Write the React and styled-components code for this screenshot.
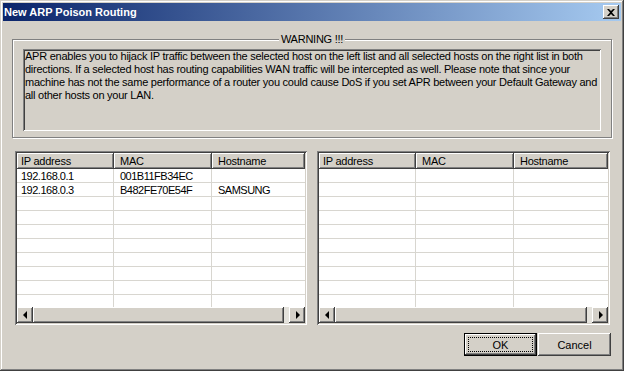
import React from 'react'
import styled, { createGlobalStyle } from 'styled-components'

const GlobalStyle = createGlobalStyle`
  html, body {
    margin: 0;
    padding: 0;
    background: #d4d0c8;
  }
  body {
    font-family: "Liberation Sans", Arial, sans-serif;
    font-size: 11px;
    color: #000;
  }
`

const raised = `
  background: #d4d0c8;
  box-shadow: inset -1px -1px #404040, inset 1px 1px #fff, inset -2px -2px #808080;
`

const sunken = `
  box-shadow: inset 1px 1px #808080, inset -1px -1px #fff, inset 2px 2px #404040, inset -2px -2px #d4d0c8;
`

const Window = styled.div`
  width: 624px;
  height: 371px;
  box-sizing: border-box;
  padding: 3px;
  background: #d4d0c8;
  box-shadow: inset -1px -1px #404040, inset 1px 1px #d4d0c8, inset -2px -2px #808080, inset 2px 2px #fff;
  display: flex;
  flex-direction: column;
`

const TitleBar = styled.div`
  height: 18px;
  flex: none;
  display: flex;
  align-items: center;
  justify-content: space-between;
  padding: 0 2px 0 1px;
  background: linear-gradient(to right, #0a246a, #a6caf0);
  color: #fff;
  font-weight: bold;
  font-size: 11px;
`

const CloseButton = styled.div`
  width: 16px;
  height: 14px;
  ${raised}
  display: flex;
  align-items: center;
  justify-content: center;
`

const Body = styled.div`
  flex: 1;
  display: flex;
  flex-direction: column;
  padding: 0 9px;
  letter-spacing: -0.25px;
`

const GroupBox = styled.fieldset`
  margin: 12px 0 0;
  padding: 3px 10px 6px;
  min-width: 0;
  border: 1px solid #808080;
  box-shadow: inset 1px 1px #fff, 1px 1px #fff;
`

const Legend = styled.legend`
  margin: 0 auto;
  padding: 0 2px;
  line-height: 13px;
  background: #d4d0c8;
  position: relative;
`

const WarningText = styled.div`
  height: 82px;
  box-sizing: border-box;
  padding: 1px 2px;
  ${sunken}
  line-height: 13px;
  white-space: nowrap;
  overflow: hidden;
`

const ListsRow = styled.div`
  display: grid;
  grid-template-columns: 292px 293px;
  gap: 10px;
  margin: 13px 2px 0 3px;
`

const ListView = styled.div`
  height: 174px;
  box-sizing: border-box;
  padding: 2px;
  background: #fff;
  ${sunken}
  display: flex;
  flex-direction: column;
`

const Columns = styled.div`
  display: grid;
  grid-template-columns: 97px 98px 1fr;
`

const Header = styled(Columns)`
  height: 16px;
  flex: none;
`

const HeaderCell = styled.div`
  ${raised}
  padding-left: 6px;
  line-height: 16px;
  &:first-child {
    padding-left: 4px;
  }
`

const Rows = styled.div`
  flex: 1;
  overflow: hidden;
`

const Row = styled(Columns)`
  height: 14px;
  box-sizing: border-box;
  border-bottom: 1px solid #d8d6d0;
`

const Cell = styled.div`
  padding: 2px 0 0 6px;
  line-height: 11px;
  letter-spacing: -0.5px;
  border-right: 1px solid #d8d6d0;
  white-space: nowrap;
  &:first-child {
    padding-left: 4px;
  }
  &:last-child {
    border-right: none;
  }
`

const ScrollBar = styled.div`
  height: 16px;
  flex: none;
  display: flex;
  background: #e4e2dc;
`

const ArrowButton = styled.div`
  width: 16px;
  height: 16px;
  ${raised}
  display: flex;
  align-items: center;
  justify-content: center;
  &::after {
    content: '';
    border-top: 4px solid transparent;
    border-bottom: 4px solid transparent;
    ${(p) => (p.$dir === 'left' ? 'border-right: 4px solid #000; margin-right: 1px;' : 'border-left: 4px solid #000; margin-left: 1px;')}
  }
`

const Thumb = styled.div`
  flex: 1;
  margin-right: 5px;
  ${raised}
`

const ButtonRow = styled.div`
  display: flex;
  justify-content: flex-end;
  gap: 1px;
  margin: 8px 1px 0 0;
  letter-spacing: 0;
`

const DialogButton = styled.div`
  width: 73px;
  height: 23px;
  box-sizing: border-box;
  display: flex;
  background: #d4d0c8;
  box-shadow: ${(p) =>
    p.$default
      ? 'inset 0 0 0 1px #000, inset -2px -2px #404040, inset 2px 2px #fff, inset -3px -3px #808080'
      : 'inset -1px -1px #404040, inset 1px 1px #fff, inset -2px -2px #808080'};
  padding: ${(p) => (p.$default ? '4px' : '0')};
`

const Label = styled.span`
  flex: 1;
  display: flex;
  align-items: center;
  justify-content: center;
  border: ${(p) => (p.$focus ? '1px dotted #000' : 'none')};
`

const hosts = [
  ['192.168.0.1', '001B11FB34EC', ''],
  ['192.168.0.3', 'B482FE70E54F', 'SAMSUNG'],
]

const HostList = ({ rows }) => {
  const filled = [...rows]
  while (filled.length < 10) filled.push(['', '', ''])
  return (
    <ListView>
      <Header>
        <HeaderCell>IP address</HeaderCell>
        <HeaderCell>MAC</HeaderCell>
        <HeaderCell>Hostname</HeaderCell>
      </Header>
      <Rows>
        {filled.map((r, i) => (
          <Row key={i}>
            {r.map((c, j) => (
              <Cell key={j}>{c}</Cell>
            ))}
          </Row>
        ))}
      </Rows>
      <ScrollBar>
        <ArrowButton $dir='left' />
        <Thumb />
        <ArrowButton $dir='right' />
      </ScrollBar>
    </ListView>
  )
}

const App = () => {
  return (
    <Window>
      <GlobalStyle />
      <TitleBar>
        <span>New ARP Poison Routing</span>
        <CloseButton>
          <svg width='8' height='7' viewBox='0 0 8 7'>
            <path d='M0 0h2l2 2 2-2h2L5 3.5 8 7H6L4 5 2 7H0l3-3.5z' fill='#000' />
          </svg>
        </CloseButton>
      </TitleBar>
      <Body>
        <GroupBox>
          <Legend>WARNING !!!</Legend>
          <WarningText>
            APR enables you to hijack IP traffic between the selected host on the left list and all selected hosts on the right list in both
            <br />
            directions. If a selected host has routing capabilities WAN traffic will be intercepted as well. Please note that since your
            <br />
            machine has not the same performance of a router you could cause DoS if you set APR between your Default Gateway and
            <br />
            all other hosts on your LAN.
          </WarningText>
        </GroupBox>
        <ListsRow>
          <HostList rows={hosts} />
          <HostList rows={[]} />
        </ListsRow>
        <ButtonRow>
          <DialogButton $default>
            <Label $focus>OK</Label>
          </DialogButton>
          <DialogButton>
            <Label>Cancel</Label>
          </DialogButton>
        </ButtonRow>
      </Body>
    </Window>
  )
}

export default App
